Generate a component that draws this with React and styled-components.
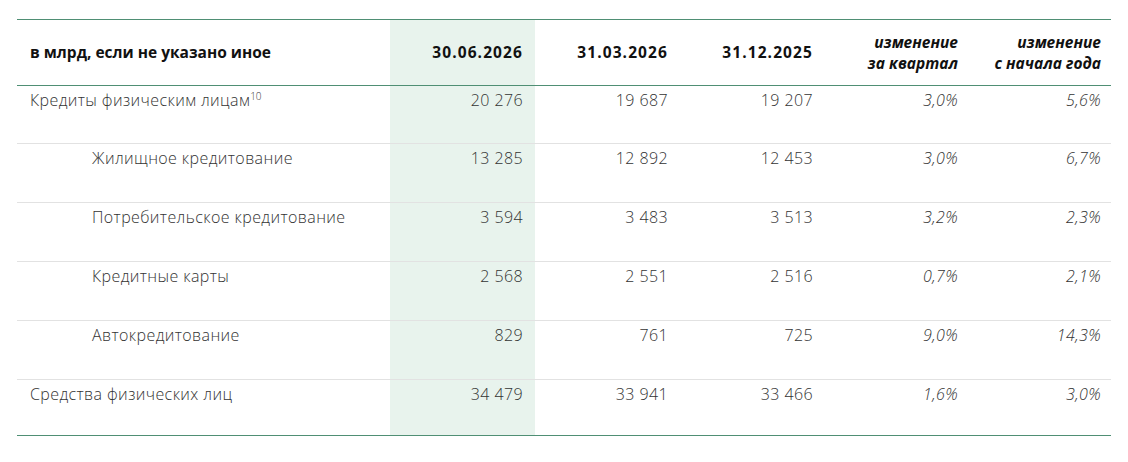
import React from 'react'
import styled, { createGlobalStyle } from 'styled-components'

const GlobalStyle = createGlobalStyle`
  body {
    margin: 0;
    background: #fff;
    font-family: "Open Sans", "Liberation Sans", sans-serif;
    color: #333;
  }
`

const rows = [
  { name: 'Кредиты физическим лицам', note: '10', h: 58, values: ['20 276', '19 687', '19 207', '3,0%', '5,6%'] },
  { name: 'Жилищное кредитование', sub: true, values: ['13 285', '12 892', '12 453', '3,0%', '6,7%'] },
  { name: 'Потребительское кредитование', sub: true, values: ['3 594', '3 483', '3 513', '3,2%', '2,3%'] },
  { name: 'Кредитные карты', sub: true, values: ['2 568', '2 551', '2 516', '0,7%', '2,1%'] },
  { name: 'Автокредитование', sub: true, values: ['829', '761', '725', '9,0%', '14,3%'] },
  { name: 'Средства физических лиц', h: 56, values: ['34 479', '33 941', '33 466', '1,6%', '3,0%'] },
]

const Page = styled.div`
  padding: 19px 17px;
`

const Table = styled.table`
  width: 1094px;
  border-collapse: collapse;
  table-layout: fixed;
  border-top: 1.5px solid #4f8f74;
  border-bottom: 1.5px solid #4f8f74;
`

const HeadCell = styled.th`
  height: 65px;
  padding: 0 ${p => (p.$last ? 10 : 12)}px 0 13px;
  text-align: ${p => (p.$left ? 'left' : 'right')};
  vertical-align: middle;
  font-size: 15.5px;
  line-height: 21px;
  font-weight: 700;
  letter-spacing: ${p => (p.$date ? '1.1px' : '0')};
  font-style: ${p => (p.$italic ? 'italic' : 'normal')};
  color: #111;
  background: ${p => (p.$hl ? '#e8f3ed' : 'transparent')};
  border-bottom: 1.5px solid #4f8f74;
`

const Row = styled.tr`
  & + & td {
    border-top: 1px solid #e2e2e2;
  }
`

const Cell = styled.td`
  height: ${p => p.$h}px;
  padding: 3px ${p => (p.$last ? 10 : 12)}px 0 ${p => (p.$sub ? 75 : 13)}px;
  box-sizing: border-box;
  vertical-align: top;
  text-align: ${p => (p.$left ? 'left' : 'right')};
  font-size: 16px;
  line-height: 22px;
  font-weight: 300;
  letter-spacing: 0.4px;
  font-style: ${p => (p.$italic ? 'italic' : 'normal')};
  color: #333;
  background: ${p => (p.$hl ? '#e8f3ed' : 'transparent')};
`

const Note = styled.sup`
  font-size: 10px;
  line-height: 0;
  letter-spacing: 0;
  vertical-align: 6px;
`

export default function App() {
  return (
    <>
      <GlobalStyle />
      <Page>
        <Table>
          <colgroup>
            <col style={{ width: 373 }} />
            <col style={{ width: 145 }} />
            <col style={{ width: 145 }} />
            <col style={{ width: 145 }} />
            <col style={{ width: 145 }} />
            <col style={{ width: 141 }} />
          </colgroup>
          <thead>
            <tr>
              <HeadCell $left>в млрд, если не указано иное</HeadCell>
              <HeadCell $hl $date>30.06.2026</HeadCell>
              <HeadCell $date>31.03.2026</HeadCell>
              <HeadCell $date>31.12.2025</HeadCell>
              <HeadCell $italic>изменение<br />за квартал</HeadCell>
              <HeadCell $italic $last>изменение<br />с начала года</HeadCell>
            </tr>
          </thead>
          <tbody>
            {rows.map(r => (
              <Row key={r.name}>
                <Cell $left $sub={r.sub} $h={r.h || 59}>
                  {r.name}
                  {r.note && <Note>{r.note}</Note>}
                </Cell>
                {r.values.map((v, j) => (
                  <Cell key={j} $h={r.h || 59} $hl={j === 0} $italic={j > 2} $last={j === 4}>
                    {v}
                  </Cell>
                ))}
              </Row>
            ))}
          </tbody>
        </Table>
      </Page>
    </>
  )
}
